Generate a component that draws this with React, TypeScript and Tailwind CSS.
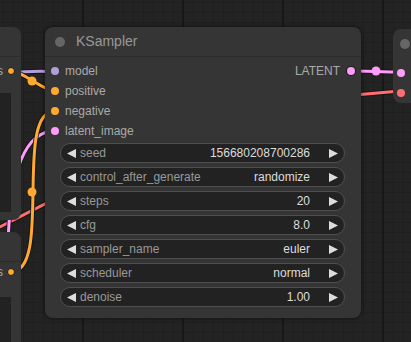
import React from "react";

const font = { fontFamily: '"Liberation Sans", Arial, sans-serif' };

const widgets = [
  { label: "seed", value: "156680208700286" },
  { label: "control_after_generate", value: "randomize" },
  { label: "steps", value: "20" },
  { label: "cfg", value: "8.0" },
  { label: "sampler_name", value: "euler" },
  { label: "scheduler", value: "normal" },
  { label: "denoise", value: "1.00" },
];

const inputs = [
  { name: "model", color: "bg-[#b39ddb]" },
  { name: "positive", color: "bg-[#ffa931]" },
  { name: "negative", color: "bg-[#ffa931]" },
  { name: "latent_image", color: "bg-[#ff9cf9]" },
];

function Arrow({ dir }: { dir: "left" | "right" }) {
  return (
    <svg width="9" height="9" viewBox="0 0 9 9" className="shrink-0">
      {dir === "left" ? (
        <polygon points="9,0 0,4.5 9,9" fill="#dddddd" />
      ) : (
        <polygon points="0,0 9,4.5 0,9" fill="#dddddd" />
      )}
    </svg>
  );
}

function Wire({ d, color }: { d: string; color: string }) {
  return (
    <>
      <path d={d} fill="none" stroke="#111" strokeOpacity="0.8" strokeWidth="5" />
      <path d={d} fill="none" stroke={color} strokeWidth="3" />
    </>
  );
}

function Canvas() {
  return (
    <svg width="411" height="342" className="absolute inset-0">
      <defs>
        <pattern id="grid" width="10" height="10" patternUnits="userSpaceOnUse" x="3" y="2">
          <path d="M10 0 L0 0 0 10" fill="none" stroke="#1b1b1b" strokeWidth="1" />
        </pattern>
      </defs>
      <rect width="411" height="342" fill="#232323" />
      <rect width="411" height="342" fill="url(#grid)" />
      {[83, 183, 283, 383].map((x) => (
        <line key={x} x1={x} y1="0" x2={x} y2="342" stroke="#181818" strokeWidth="2" />
      ))}
      <Wire d="M -10 232 L 45 204 L 355 95 L 400 91" color="#ff6e6e" />
      <Wire d="M 55 131 C 25 131, 10 170, 8 245" color="#ff9cf9" />
      <Wire d="M 0 74 C 20 72, 35 70, 55 72" color="#b39ddb" />
      <Wire d="M 11 71 C 23 71, 43 91, 55 91" color="#ffa931" />
      <Wire d="M 11 272 C 53 272, 13 111, 55 111" color="#ffa931" />
      <Wire d="M 351 71 C 365 71, 385 72, 401 72" color="#ff9cf9" />
      <circle cx="32" cy="81" r="4.5" fill="#ffa931" />
      <circle cx="32" cy="192" r="4.5" fill="#ffa931" />
      <circle cx="376" cy="71" r="4.5" fill="#ff9cf9" />
    </svg>
  );
}

function SideNode({
  top,
  height,
  rowTop,
  areaTop,
  areaHeight,
}: {
  top: string;
  height: string;
  rowTop: string;
  areaTop: string;
  areaHeight: string;
}) {
  return (
    <div className={`absolute left-0 w-[21px] bg-[#353535] rounded-r-lg overflow-hidden flex flex-col ${top} ${height}`}>
      <div className="h-[30px] shrink-0 border-b border-[#2b2b2b]" />
      <div className={`h-[20px] shrink-0 relative flex items-center ${rowTop}`}>
        <span className="absolute right-[18px] text-[12px] text-[#aaaaaa] leading-none">s</span>
        <span className="absolute left-[7px] w-[8px] h-[8px] rounded-full bg-[#ffa931] border border-[#1a1a1a]" />
      </div>
      <div className={`w-[11px] bg-[#222222] shrink-0 ${areaTop} ${areaHeight}`} />
    </div>
  );
}

export default function App() {
  return (
    <div className="relative w-[411px] h-[342px] overflow-hidden bg-[#232323]" style={font}>
      <Canvas />

      <SideNode top="top-[27px]" height="h-[193px]" rowTop="mt-[4px]" areaTop="mt-[12px]" areaHeight="h-[119px]" />
      <SideNode top="top-[232px]" height="h-[130px]" rowTop="mt-0" areaTop="mt-[15px]" areaHeight="h-[60px]" />

      {/* right node */}
      <div className="absolute left-[393px] top-[29px] w-[30px] h-[74px] rounded-l-lg bg-[#353535] flex flex-col">
        <div className="h-[30px] flex items-center pl-[7px]">
          <span className="w-[10px] h-[10px] rounded-full bg-[#666666]" />
        </div>
        <div className="pt-[4px] flex flex-col pl-[4px]">
          <div className="h-[20px] flex items-center">
            <span className="w-[8px] h-[8px] rounded-full bg-[#ff9cf9]" />
          </div>
          <div className="h-[20px] flex items-center">
            <span className="w-[8px] h-[8px] rounded-full bg-[#ff6e6e]" />
          </div>
        </div>
      </div>

      {/* KSampler */}
      <div className="absolute left-[45px] top-[27px] w-[316px] h-[291px] rounded-lg bg-[#353535] shadow-[0_0_4px_rgba(0,0,0,0.6)] flex flex-col">
        <div className="h-[30px] shrink-0 flex items-center pl-[10px] gap-[11px] border-b border-[#2b2b2b]">
          <span className="w-[10px] h-[10px] rounded-full bg-[#666666]" />
          <span className="text-[14px] text-[#999999]">KSampler</span>
        </div>

        <div className="pt-[4px] flex flex-col">
          {inputs.map((s, i) => (
            <div key={s.name} className="h-[20px] flex items-center pl-[6px] pr-[6px]">
              <span className={`w-[8px] h-[8px] rounded-full ${s.color}`} />
              <span className="ml-[6px] text-[12px] text-[#aaaaaa] flex-1">{s.name}</span>
              {i === 0 && (
                <>
                  <span className="text-[12px] text-[#aaaaaa]">LATENT</span>
                  <span className="ml-[7px] w-[8px] h-[8px] rounded-full bg-[#ff9cf9] ring-1 ring-[#1a1a1a]" />
                </>
              )}
            </div>
          ))}
        </div>

        <div className="mt-[2px] pl-[15px] pr-[16px] flex flex-col gap-[4px]">
          {widgets.map((w) => (
            <div
              key={w.label}
              className="h-[20px] rounded-full border border-[#4f4f4f] bg-[#222222] flex items-center px-[6px] text-[12px]"
            >
              <Arrow dir="left" />
              <span className="ml-[4px] flex-1 text-[#999999]">{w.label}</span>
              <span className="text-[#dddddd]">{w.value}</span>
              <span className="ml-[19px]">
                <Arrow dir="right" />
              </span>
            </div>
          ))}
        </div>
      </div>
    </div>
  );
}
